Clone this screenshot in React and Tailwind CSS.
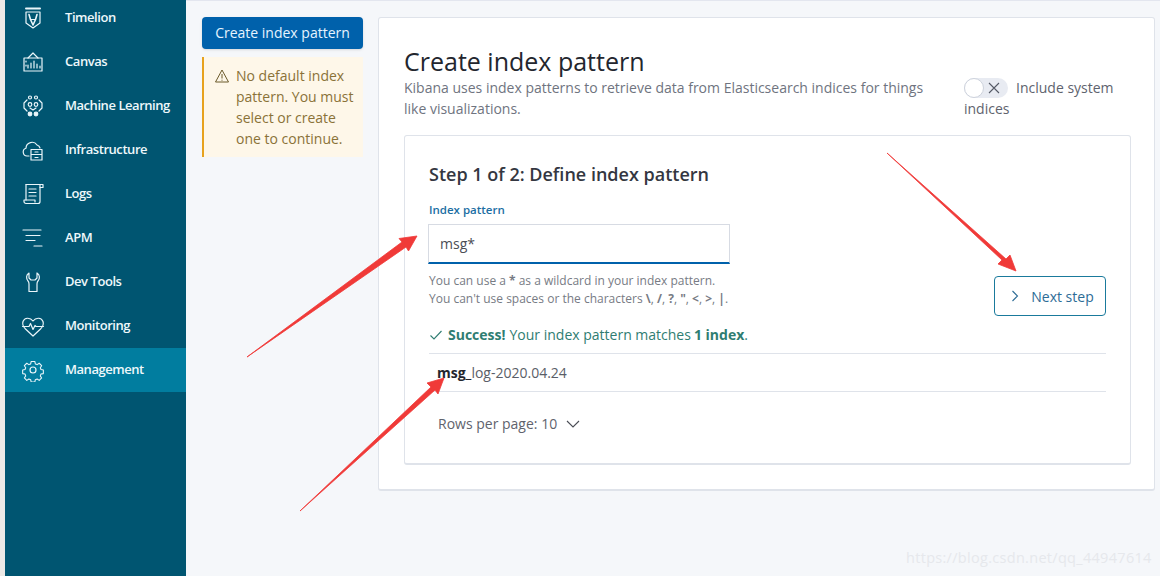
import React from "react";

const S = ({ children }) => (
  <svg width="24" height="24" viewBox="0 0 24 24" fill="none" stroke="#eaf6fa" strokeWidth="1.2" strokeLinejoin="round" strokeLinecap="round">
    {children}
  </svg>
);

const icons = {
  Timelion: (
    <S>
      <path d="M5 2.500h14" strokeWidth="2" />
      <path d="M5 6h14v11l-7 5-7-5z" />
      <path d="M8 8.500l1.500 5L12 19l2.500-5.500 1.500-5" strokeWidth="1.600" />
      <path d="M9.500 13.500h5" />
    </S>
  ),
  Canvas: (
    <S>
      <path d="M3 8h18v13H3z" />
      <path d="M7 8l5-5 5 5" />
      <path d="M7 18v-3M10 18v-5M13 18v-7M16 18v-4M19 18v-2M5 11v1M5 15v1" />
    </S>
  ),
  "Machine Learning": (
    <S>
      <circle cx="9" cy="3.500" r="1.500" />
      <circle cx="15" cy="3.500" r="1.500" />
      <circle cx="9" cy="10.500" r="1.800" />
      <circle cx="15" cy="10.500" r="1.800" />
      <circle cx="9" cy="20" r="1.800" fill="#eaf6fa" />
      <circle cx="15" cy="20" r="1.800" fill="#eaf6fa" />
      <path d="M6 6L3 9v5l3 3M18 6l3 3v5l-3 3M9 14l3 2 3-2" />
    </S>
  ),
  Infrastructure: (
    <S>
      <path d="M8 18H6a4 4 0 0 1-1-7.800A6 6 0 0 1 16 7a4 4 0 0 1 3 3" />
      <path d="M10 11.500h11V22H10zM10 16.500h11M14 14h3M14 19.500h3" />
    </S>
  ),
  Logs: (
    <S>
      <path d="M5 2.500h14v17a2 2 0 0 1-2 2H5a2 2 0 0 1-2-2V18h11v2" />
      <path d="M5 18V2.500M19 2.500h3v3h-3" />
      <path d="M8 7h7M8 10.500h7M8 14h7" />
    </S>
  ),
  APM: (
    <S>
      <path d="M2 4h18M5 9.500h14M5 14.500h9M13 20h8" />
    </S>
  ),
  "Dev Tools": (
    <S>
      <path d="M8 3C5 4.500 5 9 7 11c1 1 1 2 1 3v7.500h8V14c0-1 0-2 1-3 2-2 2-6.500-1-8v5l-2 2h-4L8 8z" />
    </S>
  ),
  Monitoring: (
    <S>
      <path d="M4.500 15C2 12.500 1 10.500 2 7.500 3.500 3.500 9 3 12 7c3-4 8.500-3.500 10 .5 1 3 0 5-2.500 7.500L12 22z" />
      <path d="M1.500 12.500H8l1.500-3 2.500 6 2-4 1 1h7.500" />
    </S>
  ),
  Management: (
    <S>
      <circle cx="12" cy="12" r="3" />
      <path d="M10 2.500h4l.6 2.700 2 .8 2.300-1.500 2.700 2.700-1.500 2.300.8 2 2.600.5v4l-2.600.5-.8 2 1.500 2.300-2.700 2.700-2.300-1.500-2 .8-.6 2.700h-4l-.6-2.700-2-.8-2.300 1.500-2.700-2.700 1.500-2.300-.8-2-2.600-.5v-4l2.600-.5.800-2-1.500-2.300 2.700-2.700 2.300 1.500 2-.8z" transform="translate(1.200 1.200) scale(0.9)" />
    </S>
  ),
};

const items = ["Timelion", "Canvas", "Machine Learning", "Infrastructure", "Logs", "APM", "Dev Tools", "Monitoring", "Management"];

export default function App() {
  return (
    <div className="relative flex h-[576px] w-[1160px] overflow-hidden bg-[#f5f7fa] font-['Open_Sans',sans-serif] text-[#343741]">
      {/* Left browser strip */}
      <div className="w-[5px] shrink-0 bg-[#ece9e6]" />

      {/* Sidebar */}
      <nav className="-mt-[4px] h-[580px] w-[181px] shrink-0 bg-[#005571]">
        {items.map((name) => (
          <div
            key={name}
            className={
              "flex h-[44px] items-center pl-[16px] text-[13px] font-semibold tracking-[-0.45px] text-[#eef8fb] " +
              (name === "Management" ? "bg-[#017d9f]" : "")
            }
          >
            <span className="flex w-[24px] justify-center">{icons[name]}</span>
            <span className="ml-[20px]">{name}</span>
          </div>
        ))}
      </nav>

      {/* Main */}
      <main className="flex min-w-0 flex-1 items-start border-t border-[#e3e6ef] pt-[16px] pl-[16px]">
        {/* Left column */}
        <div className="w-[161px] shrink-0">
          <button className="h-[32px] w-full rounded-[4px] bg-[#0061ab] text-center text-[14px] leading-[32px] text-[#e6f4ff] shadow-sm">
            Create index pattern
          </button>
          <div className="mt-[8px] flex h-[100px] border-l-2 border-[#e7a21e] bg-[#fef7e9] pt-[8px] pl-[10px]">
            <svg className="mt-[3px] shrink-0" width="16" height="16" viewBox="0 0 16 16" fill="none" stroke="#6b5a2a" strokeWidth="1" strokeLinejoin="round">
              <path d="M8 2L1.500 14h13z" />
              <path d="M8 6v4.500M8 11.700v1" />
            </svg>
            <p className="ml-[6px] text-[14px] leading-[21px] text-[#8a7238]">
              No default index pattern. You must select or create one to continue.
            </p>
          </div>
        </div>

        {/* Panel */}
        <section className="ml-[15px] h-[474px] w-[777px] shrink-0 rounded-[3px] border border-[#dfe3ea] border-b-2 bg-white pt-[29px] pr-[23px] pl-[25px]">
          <div className="flex">
            <div className="w-[536px] shrink-0">
              <h1 className="text-[25px] leading-[28px] font-medium text-[#23262e]">Create index pattern</h1>
              <p className="mt-[2px] text-[14px] leading-[21px] text-[#6f7480]">
                Kibana uses index patterns to retrieve data from Elasticsearch indices for things like visualizations.
              </p>
            </div>
            <div className="ml-[24px] w-[160px] pt-[30px] text-[14px] leading-[21px] text-[#5e636e]">
              <span className="relative mr-[8px] inline-block h-[20px] w-[44px] rounded-full bg-[#e8ebf2] align-[-5px]">
                <span className="absolute top-0 left-0 h-[20px] w-[20px] rounded-full border border-[#cdd2dc] bg-white" />
                <svg className="absolute top-[4px] left-[24px]" width="12" height="12" viewBox="0 0 12 12" stroke="#555a66" strokeWidth="1.100">
                  <path d="M1 1l10 10M11 1L1 11" />
                </svg>
              </span>
              Include system indices
            </div>
          </div>

          {/* Inner card */}
          <div className="mt-[16px] flex h-[330px] w-[727px] flex-col rounded-[3px] border border-[#dfe3ea] border-b-2 bg-white px-[24px] pt-[26px]">
            <h2 className="text-[18px] leading-[24px] font-semibold text-[#343741]">Step 1 of 2: Define index pattern</h2>

            <div className="flex items-end">
              <div className="w-[566px] shrink-0">
                <label className="mt-[17px] block text-[11.500px] leading-[14px] font-semibold text-[#1b6ea3]">Index pattern</label>
                <div className="mt-[7px] -ml-[1px] flex h-[40px] w-[302px] items-center border border-[#d7dbe3] border-b-[#0061ab] border-b-2 bg-white pl-[11px] text-[14px] text-[#4a4d55]">
                  msg*
                </div>
                <p className="mt-[8px] text-[12px] leading-[18px] text-[#777b84]">
                  You can use a <b className="font-bold">*</b> as a wildcard in your index pattern.
                  <br />
                  You can't use spaces or the characters <b className="font-bold">\</b>, <b className="font-bold">/</b>, <b className="font-bold">?</b>, <b className="font-bold">"</b>, <b className="font-bold">&lt;</b>, <b className="font-bold">&gt;</b>, <b className="font-bold">|</b>.
                </p>
              </div>
              <button className="mb-[-8px] -ml-[1px] flex h-[40px] w-[112px] items-center justify-center rounded-[4px] border border-[#1a7a9c] bg-white pl-[3px] text-[14px] text-[#2d6c96]">
                <svg width="12" height="12" viewBox="0 0 12 12" fill="none" stroke="#2d6c96" strokeWidth="1.100">
                  <path d="M3.500 1l5 5-5 5" />
                </svg>
                <span className="ml-[10px]">Next step</span>
              </button>
            </div>

            <div className="mt-[16px] flex h-[21px] items-center text-[14px] text-[#2f7d72]">
              <svg width="14" height="14" viewBox="0 0 14 14" fill="none" stroke="#2f7d72" strokeWidth="1.100" className="mr-[5px] shrink-0">
                <path d="M1.500 7.500l3.500 3.500 7.500-8" />
              </svg>
              <b className="font-bold">Success!</b>
              <span className="ml-[4px]">Your index pattern matches</span>
              <b className="ml-[3px] font-bold">1 index</b>
              <span>.</span>
            </div>

            <div className="mt-[8px] flex h-[39px] items-center border-y border-[#dfe3ea] pl-[8px] text-[14px] text-[#5a5e68]">
              <b className="font-bold text-[#23262e]">msg_</b>log-2020.04.24
            </div>

            <div className="mt-[21px] flex h-[21px] items-center pl-[9px] text-[14px] text-[#5f636d]">
              Rows per page: 10
              <svg className="ml-[9px]" width="14" height="14" viewBox="0 0 14 14" fill="none" stroke="#4a4d55" strokeWidth="1.100">
                <path d="M1 4l6 6 6-6" />
              </svg>
            </div>
          </div>
        </section>
      </main>

      {/* Watermark */}
      <span className="absolute top-[547px] left-[906px] text-[14.500px] tracking-[0.3px] whitespace-nowrap text-[#e6e8ec]">
        https://blog.csdn.net/qq_44947614
      </span>

      {/* Annotation arrows */}
      <svg className="pointer-events-none absolute top-0 left-0" width="1160" height="576" fill="#f03a38" stroke="#f03a38" strokeWidth="0.8" strokeLinejoin="round">
        <path d="M247 357L402 242 399 238.500 417 236 408.500 251 406 247z" />
        <path d="M887 153L1006 259 1010 255 1016 271 998 264 1002 260z" />
        <path d="M300 511L431 387 427 383 444 378 438 394 435 390z" />
      </svg>
    </div>
  );
}
